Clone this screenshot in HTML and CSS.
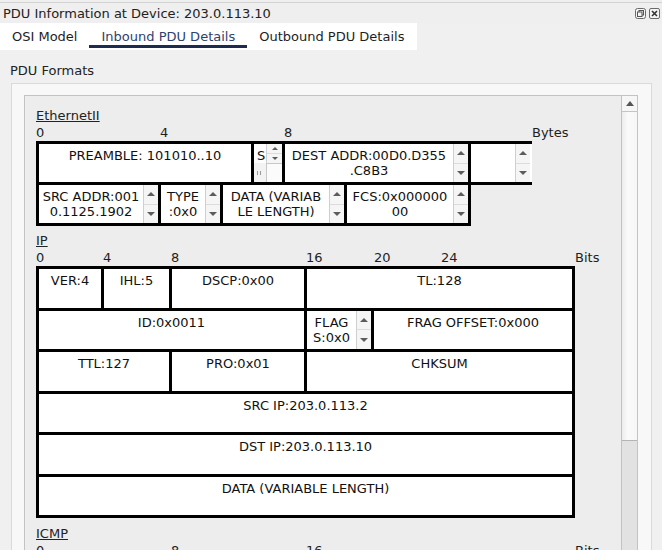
FILE: index.html
```html
<!DOCTYPE html>
<html>
<head>
<meta charset="utf-8">
<title>PDU Information</title>
<link rel="stylesheet" href="styles.css">
</head>
<body>
<div class="titlebar">
  <span class="title">PDU Information at Device: 203.0.113.10</span>
  <div class="winbtns">
    <svg class="winbtn" width="11" height="11" viewBox="0 0 11 11"><rect x="0.5" y="0.5" width="10" height="10" rx="2" fill="#f4f4f4" stroke="#6a6a6a"/><rect x="4" y="2.5" width="4.5" height="4.5" fill="none" stroke="#555"/><rect x="2.5" y="4" width="4.5" height="4.5" fill="#f4f4f4" stroke="#555"/></svg>
    <svg class="winbtn" width="11" height="11" viewBox="0 0 11 11"><rect x="0.5" y="0.5" width="10" height="10" rx="1.5" fill="#f4f4f4" stroke="#6a6a6a"/><path d="M3 3 L8 8 M8 3 L3 8" stroke="#333" stroke-width="1.6"/></svg>
  </div>
</div>
<div class="tabs">
  <div class="tab">OSI Model</div>
  <div class="tab active">Inbound PDU Details</div>
  <div class="tab">Outbound PDU Details</div>
</div>
<div class="content">
  <div class="group-label">PDU Formats</div>
  <div class="frame">
    <div class="panel">
      <div class="viewport">
        <div class="sec-label">EthernetII</div>
        <div class="ruler">
          <span style="left:0">0</span><span style="left:124px">4</span><span style="left:248px">8</span><span style="left:496px">Bytes</span>
        </div>
        <div class="table eth">
          <div class="row">
            <div class="cell" style="width:218px"><div class="txt">PREAMBLE: 101010..10</div></div>
            <div class="cell sfd" style="width:34px">
              <div class="sfd-txt">SFD</div>
              <div class="spin small"><span class="up"></span><span class="down"></span></div>
              <div class="hscroll"><i></i><i></i></div>
              <div class="corner"></div>
            </div>
            <div class="cell" style="width:189px"><div class="txt">DEST ADDR:00D0.D355<br>.C8B3</div><div class="spin"><span class="up"></span><span class="down"></span></div></div>
            <div class="cell open" style="width:64px"><div class="txt"></div><div class="spin"><span class="up"></span><span class="down"></span></div></div>
          </div>
          <div class="row">
            <div class="cell" style="width:125px"><div class="txt">SRC ADDR:001<br>0.1125.1902</div><div class="spin"><span class="up"></span><span class="down"></span></div></div>
            <div class="cell" style="width:65px"><div class="txt">TYPE<br>:0x0</div><div class="spin"><span class="up"></span><span class="down"></span></div></div>
            <div class="cell" style="width:127px"><div class="txt">DATA (VARIAB<br>LE LENGTH)</div><div class="spin"><span class="up"></span><span class="down"></span></div></div>
            <div class="cell" style="width:127px"><div class="txt">FCS:0x000000<br>00</div><div class="spin"><span class="up"></span><span class="down"></span></div></div>
          </div>
        </div>

        <div class="sec-label ip-label">IP</div>
        <div class="ruler">
          <span style="left:0">0</span><span style="left:67px">4</span><span style="left:135px">8</span><span style="left:270px">16</span><span style="left:338px">20</span><span style="left:405px">24</span><span style="left:539px">Bits</span>
        </div>
        <div class="table ip">
          <div class="row">
            <div class="cell" style="width:68px"><div class="txt">VER:4</div></div>
            <div class="cell" style="width:71px"><div class="txt">IHL:5</div></div>
            <div class="cell" style="width:138px"><div class="txt">DSCP:0x00</div></div>
            <div class="cell" style="width:271px"><div class="txt">TL:128</div></div>
          </div>
          <div class="row">
            <div class="cell" style="width:271px"><div class="txt">ID:0x0011</div></div>
            <div class="cell" style="width:70px"><div class="txt">FLAG<br>S:0x0</div><div class="spin"><span class="up"></span><span class="down"></span></div></div>
            <div class="cell" style="width:204px"><div class="txt">FRAG OFFSET:0x000</div></div>
          </div>
          <div class="row">
            <div class="cell" style="width:136px"><div class="txt">TTL:127</div></div>
            <div class="cell" style="width:138px"><div class="txt">PRO:0x01</div></div>
            <div class="cell" style="width:271px"><div class="txt">CHKSUM</div></div>
          </div>
          <div class="row">
            <div class="cell" style="width:539px"><div class="txt">SRC IP:203.0.113.2</div></div>
          </div>
          <div class="row">
            <div class="cell" style="width:539px"><div class="txt">DST IP:203.0.113.10</div></div>
          </div>
          <div class="row">
            <div class="cell" style="width:539px"><div class="txt">DATA (VARIABLE LENGTH)</div></div>
          </div>
        </div>

        <div class="sec-label icmp-label">ICMP</div>
        <div class="ruler">
          <span style="left:0">0</span><span style="left:135px">8</span><span style="left:270px">16</span><span style="left:539px">Bits</span>
        </div>
      </div>
      <div class="vscroll">
        <div class="vbtn"><span class="arrow-up"></span></div>
        <div class="thumb"></div>
        <div class="track"></div>
      </div>
    </div>
  </div>
</div>
</body>
</html>
```

FILE: styles.css
```css
html, body {
  margin: 0;
  padding: 0;
  height: 550px;
  overflow: hidden;
}
body {
  font-family: "DejaVu Sans", "Liberation Sans", sans-serif;
  font-size: 13px;
  color: #1e1e1e;
  background: #f0f0f0;
}
.titlebar {
  height: 23px;
  box-sizing: border-box;
  padding: 6px 2px 0 3px;
  display: flex;
  justify-content: space-between;
  background: linear-gradient(#efefef 0 2px, #d2d2d2 2px 3px, #efefef 3px);
}
.title {
  line-height: 16px;
  color: #222;
}
.winbtns {
  display: flex;
  gap: 3px;
  padding-top: 2px;
}
.winbtn {
  display: block;
}
.tabs {
  display: flex;
  width: 417px;
  height: 27px;
  background: #fff;
}
.tab {
  padding: 6px 12px 0;
  line-height: 16px;
  height: 16px;
  border-bottom: 3px solid transparent;
  white-space: nowrap;
  color: #1e1e1e;
}
.tab.active {
  border-bottom-color: #1b2c4e;
  color: #2e4270;
}
.content {
  padding: 13px 0 0 10px;
}
.group-label {
  line-height: 16px;
  color: #222;
}
.frame {
  margin: 4px 0 0 1px;
  width: 641px;
  box-sizing: border-box;
  border: 1px solid #dadada;
  background: #f8f8f8;
  padding: 11px 13px 0 12px;
}
.panel {
  display: flex;
  width: 614px;
  height: 470px;
  box-sizing: border-box;
  border: 1px solid #c3c3c3;
  background: #ededed;
}
.viewport {
  flex: 1;
  padding: 11px 0 0 11px;
  overflow: hidden;
}
.sec-label {
  line-height: 16px;
  padding-top: 1px;
  height: 15px;
  text-decoration: underline;
  color: #222;
}
.ip-label {
  margin-top: 6px;
}
.icmp-label {
  margin-top: 7px;
}
.ruler {
  position: relative;
  height: 18px;
  line-height: 17px;
}
.ruler span {
  position: absolute;
  top: 1px;
}
.table .row {
  display: flex;
}
.table .row + .row {
  margin-top: -3px;
}
.cell {
  display: flex;
  box-sizing: border-box;
  border: 3px solid #000;
  background: #fff;
  height: 44px;
  flex: none;
}
.ip .cell {
  height: 44.5px;
}
.row .cell + .cell {
  margin-left: -3px;
}
.cell.open {
  border-right: none;
  padding-right: 2px;
}
.txt {
  flex: 1;
  min-width: 0;
  text-align: center;
  padding-top: 4px;
  line-height: 15px;
  white-space: nowrap;
  overflow: hidden;
  color: #111;
}
.spin {
  width: 15px;
  flex: none;
  box-sizing: border-box;
  border-left: 1px solid #cfcfcf;
  background: #f5f5f5;
  display: flex;
  flex-direction: column;
}
.spin span {
  flex: 1;
  display: flex;
  align-items: center;
  justify-content: center;
}
.spin .up {
  border-bottom: 1px solid #dcdcdc;
}
.spin .up::before {
  content: "";
  border-left: 4px solid transparent;
  border-right: 4px solid transparent;
  border-bottom: 4px solid #5c5c5c;
}
.spin .down::before {
  content: "";
  border-left: 4px solid transparent;
  border-right: 4px solid transparent;
  border-top: 4px solid #5c5c5c;
}
.cell.sfd {
  display: grid;
  grid-template-columns: 1fr 16px;
  grid-template-rows: 19px 1fr;
}
.sfd-txt {
  padding: 4px 0 0 3px;
  line-height: 15px;
  overflow: hidden;
  white-space: nowrap;
  color: #111;
}
.spin.small {
  width: 16px;
}
.spin.small .up::before {
  border-left-width: 3px;
  border-right-width: 3px;
  border-bottom-width: 3px;
}
.spin.small .down::before {
  border-left-width: 3px;
  border-right-width: 3px;
  border-top-width: 3px;
}
.hscroll {
  background: #f3f3f3;
  display: flex;
  align-items: center;
  gap: 2px;
  padding-left: 3px;
}
.hscroll i {
  display: block;
  width: 1px;
  height: 4px;
  background: #9a9a9a;
}
.corner {
  box-sizing: border-box;
  border-left: 1px solid #c8c8c8;
  border-top: 1px solid #c8c8c8;
  background: #fbfbfb;
}
.vscroll {
  width: 16px;
  flex: none;
  box-sizing: border-box;
  border-left: 1px solid #c2c2c2;
  display: flex;
  flex-direction: column;
  background: #e3e3e3;
}
.vbtn {
  height: 16px;
  box-sizing: border-box;
  border-bottom: 1px solid #c4c4c4;
  background: #f6f6f6;
  display: flex;
  align-items: center;
  justify-content: center;
}
.arrow-up {
  border-left: 4px solid transparent;
  border-right: 4px solid transparent;
  border-bottom: 5px solid #555;
}
.thumb {
  height: 329px;
  box-sizing: border-box;
  border-bottom: 1px solid #b4b4b4;
  background: linear-gradient(to right, #ececec, #fafafa 40%, #f6f6f6);
}
.track {
  flex: 1;
  background: #e2e2e2;
}
```
